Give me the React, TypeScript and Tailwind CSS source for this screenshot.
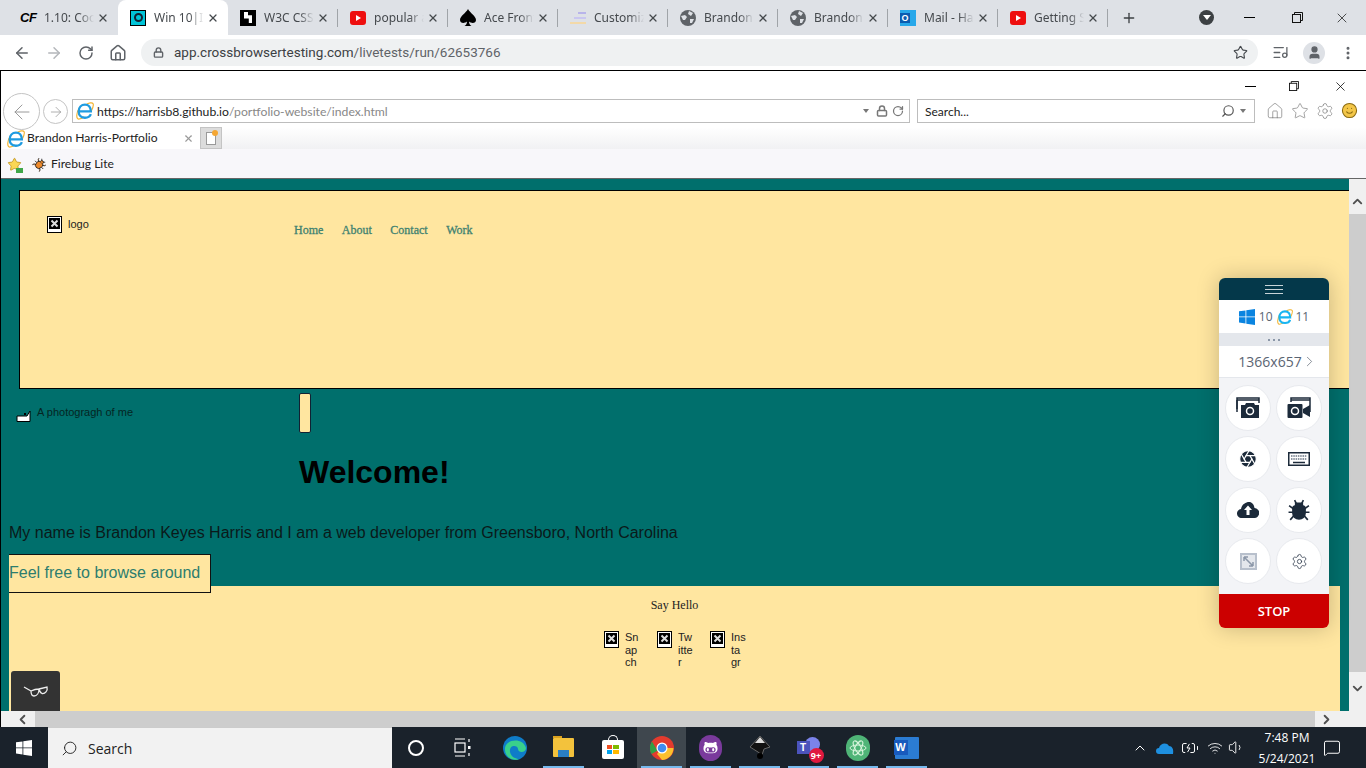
import { ArrowLeft, ArrowRight, RotateCw, Home, Lock, Star, ListMusic, User, EllipsisVertical, Plus, X, Search, ChevronDown, ChevronRight, ChevronLeft, ChevronUp, Settings, Bug, Aperture, Wifi, Volume1, BatteryCharging, MessageSquare, Smile } from "lucide-react";
import { FaGithubAlt } from "react-icons/fa";
import type { ReactNode } from "react";

const YELLOW = "bg-[#ffe6a0]";

const IeIcon = ({ size = 18, color = "#1f9be0" }: { size?: number; color?: string }) => (
  <svg width={size} height={size} viewBox="0 0 20 20" fill="none">
    <path d="M4 6C0 12 0 19 3 19C5 19 7 18 9 16.500M11 3C14 1 18 0 19 2C20 4 18 8 17 10" stroke="#f2b431" strokeWidth="1.300" />
    <path d="M3.500 10.500H16.500C16.500 6 14 3 10 3C6 3 3 6 3 10.500C3 15 6 17.500 10 17.500C13 17.500 15.500 16 16.500 13.500" stroke={color} strokeWidth="2.600" />
  </svg>
);

const RestoreIcon = ({ size = 11 }: { size?: number }) => (
  <svg width={size} height={size} viewBox="0 0 11 11" fill="none" stroke="#111" strokeWidth="1">
    <rect x="0.500" y="2.500" width="8" height="8" />
    <path d="M2.500 2.500V0.500H10.500V8.500H8.500" />
  </svg>
);

const Globe16 = () => (
  <svg width="16" height="16" viewBox="0 0 16 16">
    <circle cx="8" cy="8" r="8" fill="#5f6368" />
    <path d="M1 6L5 5L7 7L5 10L3 10ZM9 1L13 3L11 6L8 4ZM10 9L14 9L12 13L10 13Z" fill="#dee1e6" />
  </svg>
);

const YoutubeIcon = () => (
  <div className="w-4 h-[14px] rounded-[3px] bg-[#ee0f0f] flex items-center justify-center">
    <div className="w-0 h-0 border-y-[3px] border-y-transparent border-l-[5px] border-l-white" />
  </div>
);

const CfIcon = () => <span className="w-4 text-[13px] leading-4 font-bold italic text-black tracking-[-0.5px] [font-family:'Liberation_Sans',sans-serif]">CF</span>;

const WinIcon = () => (
  <div className="w-4 h-4 bg-[#00c4d8] border border-black flex items-center justify-center">
    <div className="w-[9px] h-[9px] rounded-full border-2 border-[#123]" />
  </div>
);

const W3Icon = () => (
  <div className="w-4 h-4 bg-black flex items-center justify-center">
    <div className="w-2 h-[11px] bg-white [clip-path:polygon(0_0,50%_0,50%_30%,100%_30%,100%_100%,60%_100%,60%_60%,0_60%)]" />
  </div>
);

const SpadeIcon = () => (
  <svg width="16" height="18" viewBox="0 0 16 18"><path d="M8 0C6 4 0 7 0 11C0 14 4 15 7 12.500C7 14.500 6 16 4.500 17H11.500C10 16 9 14.500 9 12.500C12 15 16 14 16 11C16 7 10 4 8 0Z" fill="#000" /></svg>
);

const CustomizeIcon = () => (
  <div className="w-4 h-4 flex flex-col items-end justify-center gap-[3px]">
    <div className="w-2 h-[2px] bg-[#b8b4ea]" />
    <div className="w-3 h-[2px] bg-[#c9c6f0]" />
    <div className="w-4 h-[2px] bg-[#f3d9a8]" />
  </div>
);

const OutlookIcon = () => (
  <div className="w-[16px] h-[16px] bg-[#28a8ea] relative">
    <div className="absolute left-0 top-[3px] w-[10px] h-[10px] bg-[#0a5cb0] text-white text-[9px] leading-[10px] font-bold text-center [font-family:'Liberation_Sans',sans-serif]">O</div>
  </div>
);

const tabs: { title: string; icon: ReactNode; active?: boolean; divider?: boolean }[] = [
  { title: "1.10: Cookies", icon: <CfIcon /> },
  { title: "Win 10|IE 11", icon: <WinIcon />, active: true },
  { title: "W3C CSS Val", icon: <W3Icon />, divider: true },
  { title: "popular anime", icon: <YoutubeIcon />, divider: true },
  { title: "Ace Front End", icon: <SpadeIcon />, divider: true },
  { title: "Customize", icon: <CustomizeIcon />, divider: true },
  { title: "Brandon Harris", icon: <Globe16 />, divider: true },
  { title: "Brandon Harris", icon: <Globe16 />, divider: true },
  { title: "Mail - Harris", icon: <OutlookIcon />, divider: true },
  { title: "Getting Started", icon: <YoutubeIcon />, divider: true },
];

const ChromeTab = ({ title, icon, active, divider }: { title: string; icon: ReactNode; active?: boolean; divider?: boolean }) => (
  <div className={active ? "w-[110px] h-[35px] bg-white rounded-t-lg flex items-center pl-3 pr-[9px] relative" : "w-[110px] h-[35px] flex items-center pl-3 pr-[9px] relative"}>
    {divider && <div className="absolute right-0 top-[9px] h-[18px] w-px bg-[#a0a4a8]" />}
    <div className="w-4 flex justify-center shrink-0">{icon}</div>
    <span className="ml-2 w-[50px] overflow-hidden whitespace-nowrap text-[12px] text-[#45494d] [mask-image:linear-gradient(to_right,black_70%,transparent)]">{title}</span>
    <X size={12} strokeWidth={2.500} className="ml-auto text-[#45494d]" />
  </div>
);

const ChromeBar = () => (
  <>
    <div className="h-[35px] bg-[#dee1e6] flex items-center pl-[8px] shrink-0">
      {tabs.map((t, i) => <ChromeTab key={i} {...t} />)}
      <Plus size={16} strokeWidth={2} className="ml-[13px] text-[#3c4043]" />
      <div className="ml-[62px] w-[15px] h-[15px] rounded-full bg-[#3c4043] flex items-center justify-center">
        <div className="w-0 h-0 border-x-[4px] border-x-transparent border-t-[5px] border-t-white" />
      </div>
      <div className="ml-[30px] w-[11px] h-px bg-black" />
      <div className="ml-[37px]"><RestoreIcon /></div>
      <X size={16} strokeWidth={1} className="ml-[31px] text-black" />
    </div>
    <div className="h-[35px] bg-white flex items-center shrink-0 text-[#5f6368]">
      <ArrowLeft size={18} strokeWidth={2} className="ml-[13px]" />
      <ArrowRight size={18} strokeWidth={2} className="ml-[14px] text-[#b4b7bb]" />
      <RotateCw size={16} strokeWidth={2.200} className="ml-[15px]" />
      <Home size={18} strokeWidth={2} className="ml-[15px]" />
      <div className="ml-[14px] w-[1117px] h-[27px] rounded-full bg-[#eff1f2] flex items-center">
        <Lock size={11} strokeWidth={3} className="ml-[12px]" />
        <span className="ml-[10px] text-[13.500px] text-[#5f6368] [font-family:Roboto,sans-serif]"><span className="text-[#3c4043]">app.crossbrowsertesting.com</span>/livetests/run/62653766</span>
        <Star size={15} strokeWidth={1.800} className="ml-auto mr-[10px] text-[#45494d]" />
      </div>
      <ListMusic size={17} strokeWidth={1.800} className="ml-[14px]" />
      <div className="ml-[14px] w-[22px] h-[22px] rounded-full bg-[#dee1e6] flex items-center justify-center">
        <User size={15} className="fill-[#5f6368]" />
      </div>
      <EllipsisVertical size={16} strokeWidth={2.500} className="ml-[15px]" />
    </div>
  </>
);

const IeBar = () => (
  <div className="shrink-0 border-t border-t-black border-l border-l-black bg-white [font-family:Lato,sans-serif]">
    {/* window buttons */}
    <div className="h-[28px] flex items-center justify-end pt-[2px]">
      <div className="mr-[33px] w-[11px] h-px bg-black" />
      <div className="mr-[34px]"><RestoreIcon size={10} /></div>
      <X size={15} strokeWidth={1.200} className="mr-[18px] text-black" />
    </div>
    {/* address row */}
    <div className="h-[28px] flex items-start bg-white">
      <div className="ml-[2px] w-[37px] h-[37px] -mt-[6px] rounded-full border border-[#c4c4c4] bg-white flex items-center justify-center z-10">
        <ArrowLeft size={24} strokeWidth={1} className="text-[#9a9a9a]" />
      </div>
      <div className="ml-[3px] w-[25px] h-[25px] rounded-full border border-[#c4c4c4] flex items-center justify-center">
        <ArrowRight size={16} strokeWidth={1} className="text-[#8a8a8a]" />
      </div>
      <div className="ml-[4px] w-[838px] h-[24px] border border-[#bdbdbd] flex items-center text-[12.200px] text-[#222]">
        <div className="ml-[3px] mr-[3px]"><IeIcon size={18} /></div>
        <span className="pt-[2px]">https://harrisb8.github.io<span className="text-[#888]">/portfolio-website/index.html</span></span>
        <div className="ml-auto w-0 h-0 border-x-[3px] border-x-transparent border-t-[4px] border-t-[#777]" />
        <Lock size={12} strokeWidth={3} className="ml-[7px] text-[#777]" />
        <RotateCw size={12} strokeWidth={2.500} className="ml-[4px] mr-[5px] text-[#777]" />
      </div>
      <div className="ml-[7px] w-[338px] h-[24px] border border-[#bdbdbd] flex items-center text-[12px] text-[#222]">
        <span className="ml-[7px] pt-px">Search...</span>
        <Search size={14} strokeWidth={2} className="ml-auto text-[#555] -scale-x-100" />
        <div className="ml-[5px] mr-[8px] w-0 h-0 border-x-[3px] border-x-transparent border-t-[4px] border-t-[#777]" />
      </div>
      <Home size={18} strokeWidth={0.800} className="mt-[3px] ml-[11px] text-[#666]" />
      <Star size={18} strokeWidth={0.800} className="mt-[3px] ml-[7px] text-[#666]" />
      <Settings size={18} strokeWidth={0.800} className="mt-[3px] ml-[7px] text-[#666]" />
      <Smile size={17} strokeWidth={1.500} className="mt-[3px] ml-[7px] text-[#8a6a10] fill-[#f3c648]" />
    </div>
    {/* tab row */}
    <div className="h-[22px] flex items-stretch bg-gradient-to-b from-white to-[#f1f1f3]">
      <div className="ml-px w-[198px] bg-white flex items-center text-[12.100px] text-[#222] pt-px">
        <div className="ml-[5px]"><IeIcon size={18} /></div>
        <span className="ml-[2px]">Brandon Harris-Portfolio</span>
        <X size={11} strokeWidth={2.500} className="ml-auto mr-[6px] text-[#9a9a9a]" />
      </div>
      <div className="w-[22px] bg-[#dcdcdc] border border-[#c4c4c4] flex items-center justify-center relative">
        <div className="w-[10px] h-[13px] bg-white border border-[#999]" />
        <div className="absolute top-[2px] right-[3px] w-[6px] h-[6px] rounded-full bg-[#f5a733]" />
      </div>
    </div>
    {/* favorites row */}
    <div className="h-[30px] bg-[#f8f7fa] border-b border-b-[#666] flex items-center text-[12.100px] text-[#222] pt-[2px]">
      <div className="ml-[6px] w-[16px] h-[16px] relative">
        <Star size={15} strokeWidth={1.200} className="text-[#b88a10] fill-[#fbd755]" />
        <div className="absolute right-0 bottom-0 w-[7px] h-[5px] bg-[#3fa648]" />
      </div>
      <Bug size={13} strokeWidth={1.500} className="ml-[10px] text-[#222] fill-[#ee8a2c] rotate-45" />
      <span className="ml-[5px]">Firebug Lite</span>
    </div>
  </div>
);

const BrokenImg = () => (
  <svg width="15" height="17" viewBox="0 0 15 17" className="shrink-0">
    <rect x="0.500" y="0.500" width="14" height="16" fill="#fff" stroke="#000" />
    <rect x="2" y="2" width="11" height="11" fill="#000" />
    <path d="M4.500 4.500L10.500 10.500M10.500 4.500L4.500 10.500" stroke="#ddd" strokeWidth="2" />
  </svg>
);

const SocialItem = ({ lines }: { lines: string[] }) => (
  <div className="flex items-start w-[53px]">
    <BrokenImg />
    <div className="ml-[6px] text-[11px] leading-[12.500px] text-[#222] [font-family:'Liberation_Sans',sans-serif]">
      {lines.map((l) => <div key={l}>{l}</div>)}
    </div>
  </div>
);

const RoundBtn = ({ children }: { children: ReactNode }) => (
  <div className="w-[46px] h-[46px] rounded-full bg-white border border-[#e8eaee] flex items-center justify-center text-[#1c2a3a]">{children}</div>
);

const CameraWindow = () => (
  <svg width="24" height="22" viewBox="0 0 24 22" fill="none">
    <path d="M1 12V3H23V6M1 3V1H23V3" stroke="#1c2a3a" strokeWidth="1.500" />
    <path d="M1 3V15" stroke="#1c2a3a" strokeWidth="1.500" />
    <path d="M5 8H9L10 6H18L19 8H23V21H5Z" fill="#1c2a3a" />
    <circle cx="14" cy="14" r="3.500" fill="none" stroke="#fff" strokeWidth="1.500" />
  </svg>
);

const VideoWindow = () => (
  <svg width="24" height="22" viewBox="0 0 24 22" fill="none">
    <path d="M4 5V1H23V15" stroke="#1c2a3a" strokeWidth="1.500" />
    <path d="M4 3H23" stroke="#1c2a3a" strokeWidth="1.500" />
    <rect x="0.500" y="7" width="15" height="14" rx="1" fill="#1c2a3a" />
    <circle cx="8" cy="14" r="3.500" stroke="#fff" strokeWidth="1.500" />
    <path d="M16 12L23 8V20L16 16Z" fill="#1c2a3a" />
  </svg>
);

const KeyboardIcon = () => (
  <svg width="22" height="14" viewBox="0 0 22 14" fill="none">
    <rect x="0.750" y="0.750" width="20.500" height="12.500" stroke="#1c2a3a" strokeWidth="1.500" />
    <path d="M3 4H19M3 7H19" stroke="#6b7684" strokeWidth="1.500" strokeDasharray="1.500 0.800" />
    <path d="M5 10.500H17" stroke="#1c2a3a" strokeWidth="1.500" />
  </svg>
);

const CloudArrow = () => (
  <svg width="22" height="16" viewBox="0 0 22 16">
    <path d="M5 16A4.500 4.500 0 0 1 4 7C5 2 9 0 12 0C15 0 17 2.500 17.500 6A5 5 0 0 1 17 16Z" fill="#1c2a3a" />
    <path d="M11 3.500L15 8H12.500V13H9.500V8H7Z" fill="#fff" />
  </svg>
);

const BugFilled = () => (
  <svg width="22" height="22" viewBox="0 0 20 20" fill="none" stroke="#1c2a3a" strokeWidth="1.500">
    <path d="M6 1L7.500 4M14 1L12.500 4M1 6L5 9M19 6L15 9M0.500 12H4.500M19.500 12H15.500M2 19L5.500 15M18 19L14.500 15" />
    <path d="M7 4H13V6H7Z" fill="#1c2a3a" />
    <path d="M4.500 8C4.500 6.500 6 6 10 6C14 6 15.500 6.500 15.500 8V13C15.500 16 13 18 10 18C7 18 4.500 16 4.500 13Z" fill="#1c2a3a" />
  </svg>
);

const WinLogo = () => (
  <svg width="16" height="16" viewBox="0 0 16 16" fill="#0a84e0">
    <path d="M0 2.300L6.500 1.400V7.500H0ZM7.300 1.300L16 0V7.500H7.300ZM0 8.300H6.500V14.500L0 13.600ZM7.300 8.300H16V16L7.300 14.700Z" />
  </svg>
);

const CbtPanel = () => (
  <div className="absolute left-[1218px] top-[99px] w-[110px] h-[350px] rounded-md overflow-hidden flex flex-col shadow-[0_0_22px_rgba(0,0,0,0.22)] [font-family:'Open_Sans',sans-serif]">
    <div className="h-[22px] bg-[#04384a] flex flex-col items-center justify-center gap-[3px]">
      <div className="w-[18px] h-px bg-[#c8d4d8]" />
      <div className="w-[18px] h-px bg-[#c8d4d8]" />
      <div className="w-[18px] h-px bg-[#c8d4d8]" />
    </div>
    <div className="h-[33px] bg-white flex items-center justify-center text-[12px] text-[#5a6472]">
      <WinLogo />
      <span className="ml-[4px]">10</span>
      <div className="ml-[4px]"><IeIcon size={16} color="#19b5f1" /></div>
      <span className="ml-[3px]">11</span>
    </div>
    <div className="h-[13px] bg-[#e4e7ec] flex items-center justify-center gap-[3px]">
      <div className="w-[2px] h-[2px] bg-[#8b97a8]" /><div className="w-[2px] h-[2px] bg-[#8b97a8]" /><div className="w-[2px] h-[2px] bg-[#8b97a8]" />
    </div>
    <div className="h-[32px] bg-white border-b border-b-[#e4e7ec] flex items-center justify-center text-[14px] text-[#5a6472] pl-[8px]">
      1366x657<ChevronRight size={17} strokeWidth={1} className="-ml-[1px]" />
    </div>
    <div className="flex-1 bg-[#f3f4f7] grid grid-cols-[46px_46px] gap-x-[5px] gap-y-[5px] pl-[6px] pt-[7px] content-start">
      <RoundBtn><CameraWindow /></RoundBtn>
      <RoundBtn><VideoWindow /></RoundBtn>
      <RoundBtn><Aperture size={20} className="fill-[#1c2a3a] text-white" strokeWidth={1.500} /></RoundBtn>
      <RoundBtn><KeyboardIcon /></RoundBtn>
      <RoundBtn><CloudArrow /></RoundBtn>
      <RoundBtn><BugFilled /></RoundBtn>
      <RoundBtn>
        <div className="w-[17px] h-[17px] border-2 border-[#b8c0cc] bg-[#e4e7ec] flex items-center justify-center">
          <svg width="11" height="11" viewBox="0 0 11 11"><path d="M1 1L10 10M1 1H5M1 1V5M10 10H6M10 10V6" stroke="#8b97a8" strokeWidth="1.500" fill="none" /></svg>
        </div>
      </RoundBtn>
      <RoundBtn><Settings size={17} strokeWidth={1.200} className="text-[#3b4656]" /></RoundBtn>
    </div>
    <div className="h-[34px] bg-[#cc0000] flex items-center justify-center text-[13px] font-semibold text-white pt-px">STOP</div>
  </div>
);

const Scrollbars = {
  V: () => (
    <div className="w-[17px] bg-[#f0f0f0] flex flex-col items-center shrink-0">
      <ChevronUp size={15} strokeWidth={3} className="mt-[15px] text-[#505050]" />
      <div className="mt-[5px] w-full h-[458px] bg-[#cdcdcd]" />
      <ChevronDown size={15} strokeWidth={3} className="mt-[9px] text-[#505050]" />
    </div>
  ),
  H: () => (
    <div className="h-[16px] bg-[#f0f0f0] border-l border-l-black flex items-center shrink-0">
      <ChevronLeft size={15} strokeWidth={3} className="ml-[14px] text-[#505050]" />
      <div className="ml-[5px] w-[1280px] h-full bg-[#cdcdcd]" />
      <ChevronRight size={15} strokeWidth={3} className="ml-[4px] text-[#505050]" />
    </div>
  ),
};

const WebPage = () => (
  <div className="flex-1 flex min-h-0 relative border-l border-l-black [font-family:'Liberation_Sans',sans-serif]">
    <div className="flex-1 bg-[#006f6c] flex flex-col pt-[11px] overflow-hidden">
      <div className={`${YELLOW} ml-[18px] h-[199px] border border-black border-r-0 flex items-start shrink-0`}>
        <div className="ml-[27px] mt-[25px] w-[247px] flex items-center">
          <BrokenImg />
          <span className="ml-[6px] -mt-[1px] text-[11px] text-[#222]">logo</span>
        </div>
        <nav className="mt-[30px] flex gap-[18.500px] text-[12px] text-[#3f8270] [-webkit-text-stroke:0.3px_#3f8270] [font-family:'Liberation_Serif',serif]">
          <span>Home</span><span>About</span><span>Contact</span><span>Work</span>
        </nav>
      </div>
      <div className="flex shrink-0">
        <div className="w-[298px] pl-[15px] pt-[16px] flex items-start">
          <svg width="15" height="15" viewBox="0 0 15 15" className="mt-[2px]"><path d="M1 9H11L14 4V14.500H1Z" fill="#fff" stroke="#000" /><rect x="8" y="6" width="2" height="2" fill="#000" /></svg>
          <span className="ml-[6px] -mt-[1px] text-[11px] text-[#052523]">A photogragh of me</span>
        </div>
        <div className="flex flex-col items-start">
          <div className={`${YELLOW} mt-[4px] w-[12px] h-[40px] border border-[#123] rounded-[2px]`} />
          <h1 className="mt-[20px] text-[32px] leading-[38px] font-bold text-black">Welcome!</h1>
        </div>
      </div>
      <p className="ml-[8px] mt-[32px] text-[16px] leading-[20px] text-[#0a1a1a] shrink-0">My name is Brandon Keyes Harris and I am a web developer from Greensboro, North Carolina</p>
      <div className={`${YELLOW} relative z-10 ml-[8px] mt-[11px] w-[202px] h-[39px] border border-[#111] border-l-0 flex items-center text-[16px] text-[#2d7d6e] shrink-0 pb-[2px]`}>Feel free to browse around</div>
      <footer className={`${YELLOW} ml-[8px] mr-[9px] -mt-[7px] flex-1 flex flex-col items-center text-[#222]`}>
        <div className="mt-[12px] text-[12px] leading-[14px] [font-family:'Liberation_Serif',serif]">Say Hello</div>
        <div className="mt-[19px] flex ml-[18px]">
          <SocialItem lines={["Sn", "ap", "ch"]} />
          <SocialItem lines={["Tw", "itte", "r"]} />
          <SocialItem lines={["Ins", "ta", "gr"]} />
        </div>
      </footer>
    </div>
    <Scrollbars.V />
    <CbtPanel />
    <div className="absolute left-[10px] bottom-0 w-[49px] h-[40px] bg-[#333333] rounded-t-[3px] flex items-center justify-center">
      <svg width="26" height="14" viewBox="0 0 26 14" fill="none" stroke="#eee" strokeWidth="1.300">
        <path d="M1 3L8 7M8 7C12 5 15 5 16 5C16 9 14 12 11 12C9 12 8 10 8 7ZM16 5L24 3C25 7 22 10 19 9.500C17.500 9 16.500 7 16 5Z" />
      </svg>
    </div>
  </div>
);

const TaskIcon = ({ children, underline, active }: { children: ReactNode; underline?: boolean; active?: boolean }) => (
  <div className={active ? "w-[49px] h-full relative flex items-center justify-center bg-[#3f474e]" : "w-[49px] h-full relative flex items-center justify-center"}>
    {children}
    {underline && <div className="absolute bottom-0 left-[4px] right-[4px] h-[2px] bg-[#76b9ed]" />}
  </div>
);

const Taskbar = () => (
  <div className="h-[41px] bg-[#1a222b] flex items-center shrink-0 text-white [font-family:'Open_Sans',sans-serif]">
    <div className="w-[48px] flex justify-center">
      <svg width="16" height="16" viewBox="0 0 16 16" fill="#fff">
        <path d="M0 2.300L6.500 1.400V7.500H0ZM7.300 1.300L16 0V7.500H7.300ZM0 8.300H6.500V14.500L0 13.600ZM7.300 8.300H16V16L7.300 14.700Z" />
      </svg>
    </div>
    <div className="w-[344px] h-full bg-[#f2f2f2] border-t border-t-[#ccc] flex items-center text-[14px] text-[#222]">
      <Search size={17} strokeWidth={1.300} className="ml-[13px] -scale-x-100" />
      <span className="ml-[10px]">Search</span>
    </div>
    <div className="ml-[16px] w-[16px] h-[16px] rounded-full border-2 border-white" />
    <svg width="17" height="19" viewBox="0 0 17 19" fill="none" stroke="#fff" strokeWidth="1.200" className="ml-[30px]">
      <path d="M1 1H11M1 18H11" />
      <rect x="1" y="5" width="10" height="9" />
      <path d="M15 1V4M15 15V18" />
      <rect x="14" y="8" width="2.500" height="3" fill="#fff" stroke="none" />
    </svg>
    <div className="ml-[19px] flex h-full items-center">
      <TaskIcon>
        <svg width="24" height="24" viewBox="0 0 24 24"><circle cx="12" cy="12" r="12" fill="#0f7cc8" /><path d="M2 12C3 3 20 1 23 12C23 17 15 17 15 13C15 9 6 8 7 16C8 21 13 23 16 23C10 26 1 21 2 12Z" fill="#39d08b" /></svg>
      </TaskIcon>
      <TaskIcon underline>
        <div className="w-[21px] h-[19px] bg-[#f3c23c] relative rounded-[1px]">
          <div className="absolute left-0 -top-[2px] w-[9px] h-[2px] bg-[#d9a11f]" />
          <div className="absolute left-[5px] bottom-0 w-[11px] h-[7px] bg-[#2a7fc4]" />
        </div>
      </TaskIcon>
      <TaskIcon>
        <div className="relative mt-[3px]">
          <div className="absolute left-[6px] -top-[5px] w-[10px] h-[8px] rounded-t-full border border-white border-b-0" />
          <div className="w-[22px] h-[19px] bg-white rounded-[2px] grid grid-cols-2 gap-px p-[5px]">
            <div className="bg-[#f25022]" /><div className="bg-[#7fba00]" /><div className="bg-[#00a4ef]" /><div className="bg-[#ffb900]" />
          </div>
        </div>
      </TaskIcon>
      <TaskIcon active underline>
        <svg width="24" height="24" viewBox="0 0 24 24">
          <circle cx="12" cy="12" r="12" fill="#e33b2e" />
          <path d="M12 12L1.600 18A12 12 0 0 1 2 5.500L7 14Z" fill="#2f9e44" />
          <path d="M12 12H23.500A12 12 0 0 1 12 24L7 18Z" fill="#fbc02d" />
          <circle cx="12" cy="12" r="5.500" fill="#fff" /><circle cx="12" cy="12" r="4.300" fill="#3f8cf0" />
        </svg>
      </TaskIcon>
      <TaskIcon underline>
        <div className="w-[23px] h-[26px] rounded-full bg-[#7a3a9c] flex items-center justify-center">
          <FaGithubAlt size={15} className="text-white" />
        </div>
      </TaskIcon>
      <TaskIcon underline>
        <svg width="22" height="26" viewBox="0 0 22 26"><path d="M11 1L21 12L15 14L13 20L9 17L1 12Z" fill="#111" stroke="#666" /><path d="M11 2L16 8H6Z" fill="#ddd" /><circle cx="11" cy="21" r="3" fill="#000" /></svg>
      </TaskIcon>
      <TaskIcon underline>
        <div className="w-[24px] h-[24px] relative">
          <div className="absolute right-[1px] top-[1px] w-[15px] h-[15px] rounded-full bg-[#7b83eb]" />
          <div className="absolute left-0 top-[5px] w-[13px] h-[13px] bg-[#4b53bc] text-[10px] leading-[13px] font-bold text-center [font-family:'Liberation_Sans',sans-serif]">T</div>
          <div className="absolute -right-[3px] -bottom-[3px] w-[15px] h-[15px] rounded-full bg-[#e0193f] text-[9px] leading-[15px] font-bold text-center">9+</div>
        </div>
      </TaskIcon>
      <TaskIcon underline>
        <div className="w-[24px] h-[26px] rounded-full bg-[#4fb477] flex items-center justify-center">
          <svg width="18" height="18" viewBox="0 0 18 18" fill="none" stroke="#d8f5dc" strokeWidth="1"><ellipse cx="9" cy="9" rx="8" ry="3" /><ellipse cx="9" cy="9" rx="8" ry="3" transform="rotate(60 9 9)" /><ellipse cx="9" cy="9" rx="8" ry="3" transform="rotate(120 9 9)" /></svg>
        </div>
      </TaskIcon>
      <TaskIcon underline>
        <div className="w-[24px] h-[22px] bg-[#2b7cd3] relative rounded-[1px]">
          <div className="absolute -left-[1px] top-[3px] w-[14px] h-[15px] bg-[#185abd] text-[11px] leading-[15px] font-bold text-center [font-family:'Liberation_Sans',sans-serif]">W</div>
        </div>
      </TaskIcon>
    </div>
    <ChevronUp size={16} strokeWidth={1.500} className="ml-[201px]" />
    <svg width="18" height="12" viewBox="0 0 18 12" className="ml-[8px]"><path d="M3 12A3 3 0 0 1 3 6C4 1 11 0 13 4C16 4 18 7 17 12Z" fill="#1e90e0" /></svg>
    <BatteryCharging size={18} strokeWidth={1.300} className="ml-[7px]" />
    <Wifi size={16} strokeWidth={1.300} className="ml-[8px]" />
    <Volume1 size={17} strokeWidth={1.300} className="ml-[5px]" />
    <div className="ml-[12px] w-[60px] text-center text-[12px] leading-[21px]">
      <div>7:48 PM</div>
      <div>5/24/2021</div>
    </div>
    <MessageSquare size={18} strokeWidth={1.300} className="ml-[6px]" />
  </div>
);

const App = () => (
  <div className="w-[1366px] h-[768px] overflow-hidden flex flex-col bg-white [font-family:'Noto_Sans',sans-serif]">
    <ChromeBar />
    <IeBar />
    <WebPage />
    <Scrollbars.H />
    <Taskbar />
  </div>
);

export default App;
